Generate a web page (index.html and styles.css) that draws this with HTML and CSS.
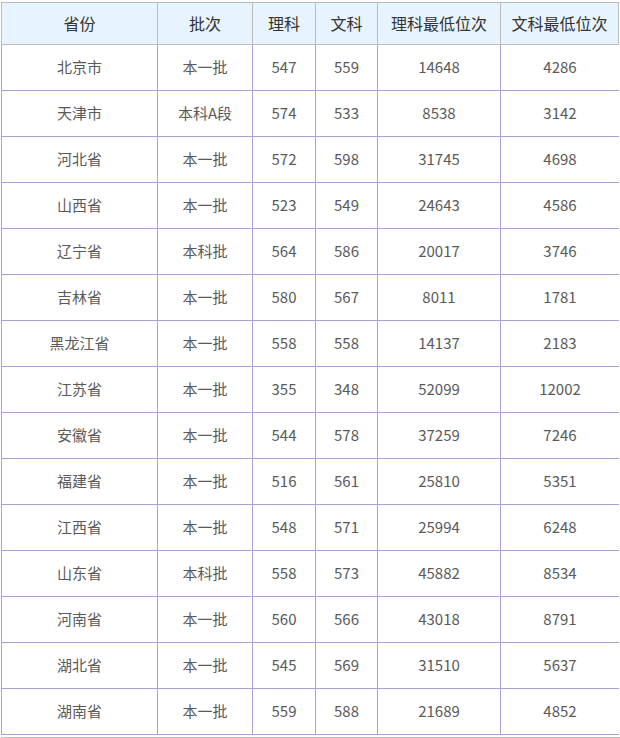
FILE: index.html
```html
<!DOCTYPE html>
<html lang="zh-CN">
<head>
<meta charset="utf-8">
<title>各省录取分数</title>
<link rel="stylesheet" href="styles.css">
</head>
<body>
<div class="wrap">
  <div class="grid">
    <div class="th first">省份</div><div class="th">批次</div><div class="th">理科</div><div class="th">文科</div><div class="th">理科最低位次</div><div class="th last">文科最低位次</div>

    <div class="td first">北京市</div><div class="td">本一批</div><div class="td">547</div><div class="td">559</div><div class="td">14648</div><div class="td">4286</div>
    <div class="td first">天津市</div><div class="td">本科A段</div><div class="td">574</div><div class="td">533</div><div class="td">8538</div><div class="td">3142</div>
    <div class="td first">河北省</div><div class="td">本一批</div><div class="td">572</div><div class="td">598</div><div class="td">31745</div><div class="td">4698</div>
    <div class="td first">山西省</div><div class="td">本一批</div><div class="td">523</div><div class="td">549</div><div class="td">24643</div><div class="td">4586</div>
    <div class="td first">辽宁省</div><div class="td">本科批</div><div class="td">564</div><div class="td">586</div><div class="td">20017</div><div class="td">3746</div>
    <div class="td first">吉林省</div><div class="td">本一批</div><div class="td">580</div><div class="td">567</div><div class="td">8011</div><div class="td">1781</div>
    <div class="td first">黑龙江省</div><div class="td">本一批</div><div class="td">558</div><div class="td">558</div><div class="td">14137</div><div class="td">2183</div>
    <div class="td first">江苏省</div><div class="td">本一批</div><div class="td">355</div><div class="td">348</div><div class="td">52099</div><div class="td">12002</div>
    <div class="td first">安徽省</div><div class="td">本一批</div><div class="td">544</div><div class="td">578</div><div class="td">37259</div><div class="td">7246</div>
    <div class="td first">福建省</div><div class="td">本一批</div><div class="td">516</div><div class="td">561</div><div class="td">25810</div><div class="td">5351</div>
    <div class="td first">江西省</div><div class="td">本一批</div><div class="td">548</div><div class="td">571</div><div class="td">25994</div><div class="td">6248</div>
    <div class="td first">山东省</div><div class="td">本科批</div><div class="td">558</div><div class="td">573</div><div class="td">45882</div><div class="td">8534</div>
    <div class="td first">河南省</div><div class="td">本一批</div><div class="td">560</div><div class="td">566</div><div class="td">43018</div><div class="td">8791</div>
    <div class="td first">湖北省</div><div class="td">本一批</div><div class="td">545</div><div class="td">569</div><div class="td">31510</div><div class="td">5637</div>
    <div class="td first">湖南省</div><div class="td">本一批</div><div class="td">559</div><div class="td">588</div><div class="td">21689</div><div class="td">4852</div>
  </div>
  <div class="after"></div>
</div>
</body>
</html>
```
FILE: styles.css
```css
html, body {
  margin: 0;
  padding: 0;
  background: #ffffff;
}
body {
  font-family: "Noto Sans CJK SC", "Noto Sans", sans-serif;
  overflow: hidden;
}
.wrap {
  padding: 2px 0 0 1px;
}
.grid {
  display: grid;
  grid-template-columns: 157px 95px 63px 62px 123px 118px;
  grid-auto-rows: 46px;
  grid-template-rows: 43px;
  width: 618px;
}
.th, .td {
  box-sizing: border-box;
  display: flex;
  align-items: center;
  justify-content: center;
  white-space: nowrap;
}
.th {
  background: #e8f4fd;
  color: #333333;
  font-size: 16px;
  border-top: 1px solid #bcbcbc;
  border-bottom: 1px solid #bcbcbc;
  border-right: 1px solid #bcbcbc;
  padding-bottom: 1px;
}
.th.first {
  border-left: 1px solid #bcbcbc;
}
.td {
  color: #5a5a5a;
  font-size: 15px;
  border-bottom: 1px solid #a9a1d6;
  border-right: 1px solid #a9a1d6;
  padding-bottom: 2px;
}
.td:nth-child(6n) {
  border-right: none;
}
.td.first {
  border-left: 1px solid #a9a1d6;
}
.after {
  margin-top: 2px;
  width: 619px;
  border-top: 1px solid #bcbcbc;
  height: 4px;
}
```
